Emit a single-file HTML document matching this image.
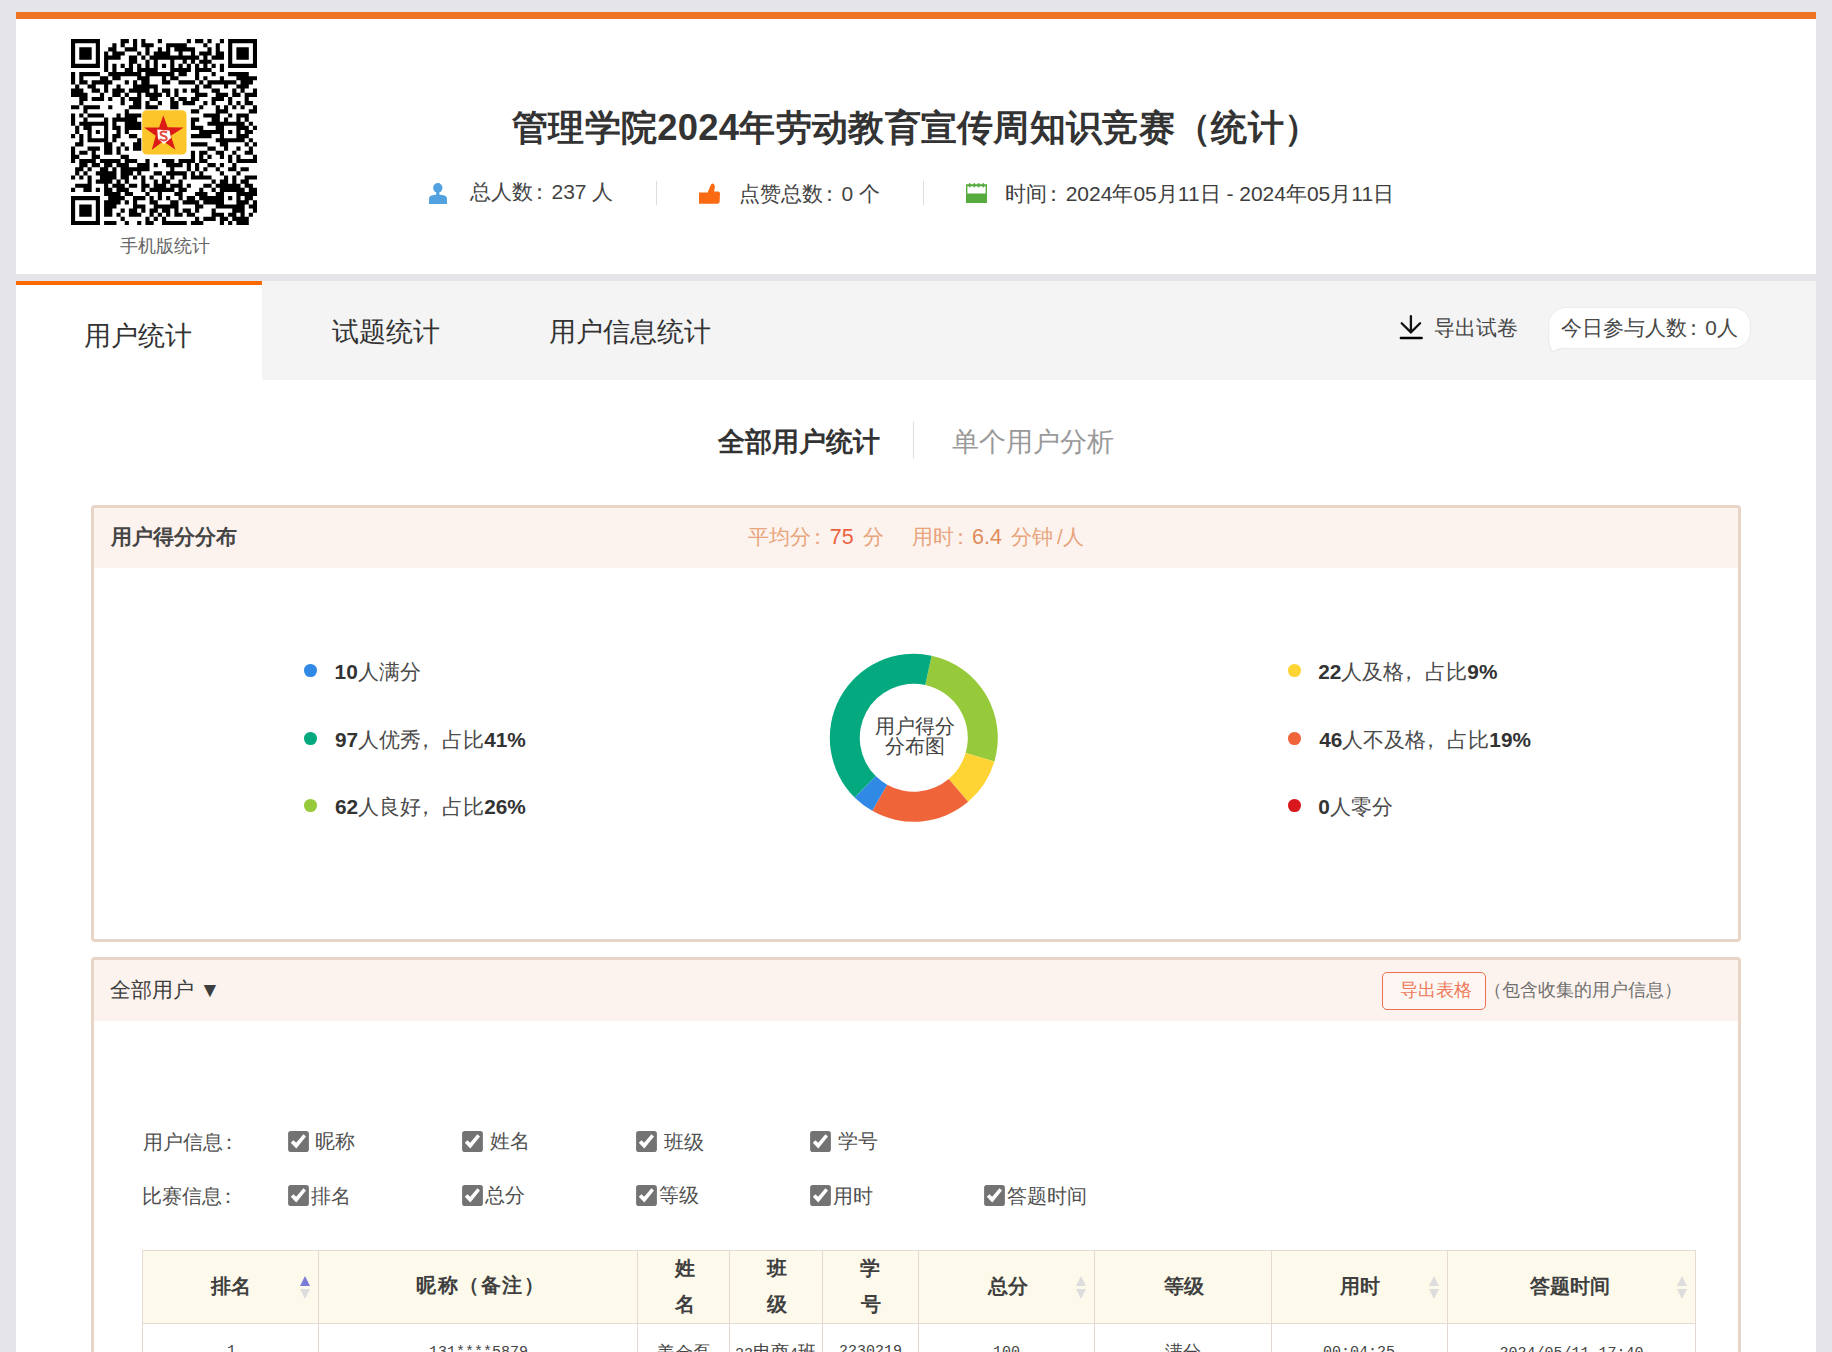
<!DOCTYPE html>
<html><head><meta charset="utf-8">
<style>
*{box-sizing:border-box;margin:0;padding:0}
html,body{width:1832px;height:1352px;overflow:hidden;background:#e5e4e9;font-family:"Liberation Sans",sans-serif;color:#333}
.a{position:absolute;white-space:nowrap;line-height:1.15}
.a b{font-weight:bold;color:#333}
.c{position:relative;left:-4px;margin-right:-2.5px}
.k{position:relative;left:-6px}
</style></head><body>
<div class="a" style="left:16px;top:12px;width:1800px;height:7px;background:#ee7322"></div>
<div class="a" style="left:16px;top:19px;width:1800px;height:255px;background:#fff"></div>
<div class="a" style="left:16px;top:281px;width:1800px;height:99px;background:#f4f4f4"></div>
<div class="a" style="left:16px;top:281px;width:246px;height:99px;background:#fff;border-top:4px solid #ff6a00"></div>
<div class="a" style="left:16px;top:380px;width:1800px;height:980px;background:#fff"></div>
<svg class="a" style="left:70.93px;top:38.93px" width="186.07" height="186.07" viewBox="0 0 45 45" shape-rendering="geometricPrecision"><path fill="#000" d="M0 0h7v1h-7zM12 0h2v1h-2zM15 0h1v1h-1zM17 0h1v1h-1zM21 0h1v1h-1zM28 0h1v1h-1zM30 0h2v1h-2zM33 0h1v1h-1zM36 0h1v1h-1zM38 0h7v1h-7zM0 1h1v1h-1zM6 1h1v1h-1zM10 1h1v1h-1zM12 1h1v1h-1zM15 1h1v1h-1zM17 1h3v1h-3zM23 1h5v1h-5zM32 1h1v1h-1zM35 1h1v1h-1zM38 1h1v1h-1zM44 1h1v1h-1zM0 2h1v1h-1zM2 2h3v1h-3zM6 2h1v1h-1zM9 2h2v1h-2zM13 2h3v1h-3zM18 2h1v1h-1zM21 2h1v1h-1zM23 2h1v1h-1zM25 2h5v1h-5zM33 2h1v1h-1zM35 2h1v1h-1zM38 2h1v1h-1zM40 2h3v1h-3zM44 2h1v1h-1zM0 3h1v1h-1zM2 3h3v1h-3zM6 3h1v1h-1zM8 3h1v1h-1zM10 3h3v1h-3zM16 3h1v1h-1zM18 3h1v1h-1zM20 3h4v1h-4zM26 3h1v1h-1zM29 3h1v1h-1zM31 3h3v1h-3zM35 3h2v1h-2zM38 3h1v1h-1zM40 3h3v1h-3zM44 3h1v1h-1zM0 4h1v1h-1zM2 4h3v1h-3zM6 4h1v1h-1zM8 4h4v1h-4zM14 4h2v1h-2zM17 4h1v1h-1zM19 4h12v1h-12zM32 4h1v1h-1zM34 4h3v1h-3zM38 4h1v1h-1zM40 4h3v1h-3zM44 4h1v1h-1zM0 5h1v1h-1zM6 5h1v1h-1zM8 5h1v1h-1zM14 5h2v1h-2zM18 5h1v1h-1zM20 5h1v1h-1zM24 5h1v1h-1zM27 5h1v1h-1zM29 5h1v1h-1zM31 5h3v1h-3zM38 5h1v1h-1zM44 5h1v1h-1zM0 6h7v1h-7zM8 6h1v1h-1zM10 6h1v1h-1zM12 6h1v1h-1zM14 6h1v1h-1zM16 6h1v1h-1zM18 6h1v1h-1zM20 6h1v1h-1zM22 6h1v1h-1zM24 6h1v1h-1zM26 6h1v1h-1zM28 6h1v1h-1zM30 6h1v1h-1zM32 6h1v1h-1zM34 6h1v1h-1zM36 6h1v1h-1zM38 6h7v1h-7zM8 7h1v1h-1zM10 7h1v1h-1zM13 7h2v1h-2zM16 7h5v1h-5zM24 7h5v1h-5zM30 7h4v1h-4zM36 7h1v1h-1zM0 8h1v1h-1zM2 8h5v1h-5zM9 8h8v1h-8zM18 8h7v1h-7zM26 8h2v1h-2zM30 8h1v1h-1zM34 8h1v1h-1zM38 8h5v1h-5zM0 9h1v1h-1zM2 9h1v1h-1zM7 9h2v1h-2zM10 9h2v1h-2zM16 9h3v1h-3zM22 9h1v1h-1zM24 9h2v1h-2zM30 9h1v1h-1zM32 9h1v1h-1zM36 9h1v1h-1zM40 9h5v1h-5zM0 10h1v1h-1zM2 10h2v1h-2zM5 10h5v1h-5zM13 10h1v1h-1zM15 10h1v1h-1zM17 10h2v1h-2zM22 10h2v1h-2zM26 10h4v1h-4zM31 10h1v1h-1zM33 10h7v1h-7zM41 10h3v1h-3zM1 11h1v1h-1zM4 11h2v1h-2zM8 11h1v1h-1zM11 11h1v1h-1zM15 11h6v1h-6zM30 11h1v1h-1zM32 11h2v1h-2zM37 11h1v1h-1zM40 11h3v1h-3zM0 12h3v1h-3zM5 12h2v1h-2zM8 12h1v1h-1zM10 12h3v1h-3zM14 12h5v1h-5zM20 12h1v1h-1zM22 12h2v1h-2zM25 12h1v1h-1zM27 12h1v1h-1zM29 12h2v1h-2zM34 12h2v1h-2zM39 12h1v1h-1zM41 12h1v1h-1zM44 12h1v1h-1zM0 13h4v1h-4zM7 13h1v1h-1zM10 13h2v1h-2zM13 13h1v1h-1zM16 13h1v1h-1zM18 13h4v1h-4zM23 13h1v1h-1zM25 13h1v1h-1zM30 13h3v1h-3zM35 13h3v1h-3zM39 13h2v1h-2zM42 13h3v1h-3zM2 14h2v1h-2zM5 14h3v1h-3zM9 14h1v1h-1zM12 14h1v1h-1zM14 14h3v1h-3zM19 14h2v1h-2zM24 14h1v1h-1zM26 14h2v1h-2zM29 14h2v1h-2zM34 14h3v1h-3zM38 14h1v1h-1zM42 14h1v1h-1zM2 15h1v1h-1zM12 15h1v1h-1zM15 15h2v1h-2zM18 15h1v1h-1zM21 15h1v1h-1zM24 15h2v1h-2zM27 15h3v1h-3zM32 15h1v1h-1zM34 15h1v1h-1zM38 15h1v1h-1zM40 15h1v1h-1zM42 15h2v1h-2zM0 16h2v1h-2zM3 16h4v1h-4zM9 16h1v1h-1zM14 16h3v1h-3zM18 16h3v1h-3zM24 16h2v1h-2zM31 16h1v1h-1zM35 16h1v1h-1zM37 16h1v1h-1zM39 16h1v1h-1zM41 16h1v1h-1zM44 16h1v1h-1zM3 17h1v1h-1zM13 17h1v1h-1zM29 17h2v1h-2zM35 17h3v1h-3zM43 17h2v1h-2zM0 18h1v1h-1zM2 18h1v1h-1zM4 18h4v1h-4zM11 18h1v1h-1zM13 18h4v1h-4zM32 18h4v1h-4zM38 18h1v1h-1zM40 18h3v1h-3zM0 19h1v1h-1zM3 19h1v1h-1zM8 19h1v1h-1zM10 19h6v1h-6zM29 19h2v1h-2zM34 19h2v1h-2zM37 19h1v1h-1zM40 19h1v1h-1zM42 19h1v1h-1zM0 20h1v1h-1zM2 20h7v1h-7zM10 20h1v1h-1zM13 20h4v1h-4zM29 20h1v1h-1zM33 20h9v1h-9zM43 20h1v1h-1zM1 21h1v1h-1zM3 21h2v1h-2zM8 21h1v1h-1zM10 21h2v1h-2zM13 21h4v1h-4zM29 21h3v1h-3zM35 21h2v1h-2zM40 21h3v1h-3zM44 21h1v1h-1zM1 22h1v1h-1zM4 22h1v1h-1zM6 22h1v1h-1zM8 22h1v1h-1zM11 22h1v1h-1zM13 22h1v1h-1zM31 22h6v1h-6zM38 22h1v1h-1zM40 22h1v1h-1zM42 22h2v1h-2zM0 23h1v1h-1zM2 23h1v1h-1zM4 23h1v1h-1zM8 23h1v1h-1zM10 23h2v1h-2zM14 23h2v1h-2zM29 23h5v1h-5zM36 23h1v1h-1zM40 23h3v1h-3zM2 24h1v1h-1zM4 24h5v1h-5zM10 24h1v1h-1zM16 24h1v1h-1zM35 24h7v1h-7zM43 24h1v1h-1zM1 25h2v1h-2zM8 25h2v1h-2zM12 25h1v1h-1zM15 25h2v1h-2zM29 25h4v1h-4zM36 25h2v1h-2zM42 25h1v1h-1zM44 25h1v1h-1zM0 26h1v1h-1zM4 26h3v1h-3zM8 26h2v1h-2zM11 26h1v1h-1zM13 26h1v1h-1zM15 26h2v1h-2zM33 26h2v1h-2zM37 26h1v1h-1zM40 26h1v1h-1zM43 26h1v1h-1zM0 27h1v1h-1zM2 27h2v1h-2zM5 27h1v1h-1zM8 27h2v1h-2zM11 27h1v1h-1zM29 27h1v1h-1zM31 27h2v1h-2zM35 27h2v1h-2zM39 27h1v1h-1zM42 27h2v1h-2zM0 28h2v1h-2zM5 28h2v1h-2zM12 28h2v1h-2zM29 28h1v1h-1zM31 28h1v1h-1zM33 28h1v1h-1zM36 28h1v1h-1zM38 28h1v1h-1zM40 28h1v1h-1zM44 28h1v1h-1zM0 29h1v1h-1zM2 29h4v1h-4zM7 29h5v1h-5zM13 29h3v1h-3zM18 29h1v1h-1zM22 29h3v1h-3zM26 29h4v1h-4zM31 29h2v1h-2zM38 29h1v1h-1zM40 29h5v1h-5zM2 30h2v1h-2zM5 30h2v1h-2zM8 30h2v1h-2zM11 30h3v1h-3zM16 30h3v1h-3zM20 30h1v1h-1zM23 30h4v1h-4zM28 30h1v1h-1zM30 30h1v1h-1zM33 30h2v1h-2zM36 30h1v1h-1zM39 30h1v1h-1zM1 31h2v1h-2zM4 31h1v1h-1zM7 31h2v1h-2zM10 31h1v1h-1zM12 31h7v1h-7zM24 31h1v1h-1zM28 31h1v1h-1zM30 31h1v1h-1zM32 31h1v1h-1zM35 31h1v1h-1zM38 31h2v1h-2zM41 31h2v1h-2zM1 32h1v1h-1zM3 32h1v1h-1zM6 32h5v1h-5zM12 32h3v1h-3zM16 32h1v1h-1zM20 32h2v1h-2zM23 32h5v1h-5zM29 32h1v1h-1zM31 32h1v1h-1zM36 32h1v1h-1zM40 32h1v1h-1zM0 33h1v1h-1zM2 33h1v1h-1zM4 33h1v1h-1zM7 33h4v1h-4zM12 33h2v1h-2zM15 33h1v1h-1zM17 33h1v1h-1zM19 33h1v1h-1zM22 33h1v1h-1zM24 33h1v1h-1zM27 33h1v1h-1zM29 33h5v1h-5zM37 33h1v1h-1zM39 33h1v1h-1zM42 33h3v1h-3zM4 34h1v1h-1zM6 34h4v1h-4zM11 34h1v1h-1zM13 34h1v1h-1zM17 34h1v1h-1zM20 34h1v1h-1zM22 34h2v1h-2zM26 34h1v1h-1zM34 34h1v1h-1zM36 34h2v1h-2zM39 34h1v1h-1zM41 34h2v1h-2zM1 35h4v1h-4zM8 35h1v1h-1zM10 35h3v1h-3zM14 35h2v1h-2zM17 35h2v1h-2zM20 35h3v1h-3zM24 35h3v1h-3zM28 35h1v1h-1zM32 35h2v1h-2zM35 35h6v1h-6zM42 35h2v1h-2zM0 36h1v1h-1zM3 36h2v1h-2zM6 36h1v1h-1zM8 36h2v1h-2zM11 36h3v1h-3zM17 36h1v1h-1zM19 36h6v1h-6zM26 36h2v1h-2zM31 36h1v1h-1zM34 36h1v1h-1zM36 36h6v1h-6zM43 36h2v1h-2zM8 37h4v1h-4zM13 37h2v1h-2zM18 37h1v1h-1zM21 37h1v1h-1zM25 37h2v1h-2zM30 37h3v1h-3zM35 37h2v1h-2zM40 37h5v1h-5zM0 38h7v1h-7zM9 38h4v1h-4zM15 38h3v1h-3zM19 38h1v1h-1zM21 38h1v1h-1zM23 38h1v1h-1zM26 38h1v1h-1zM28 38h2v1h-2zM31 38h6v1h-6zM38 38h1v1h-1zM40 38h1v1h-1zM42 38h2v1h-2zM0 39h1v1h-1zM6 39h1v1h-1zM8 39h4v1h-4zM13 39h1v1h-1zM15 39h1v1h-1zM19 39h2v1h-2zM24 39h2v1h-2zM27 39h4v1h-4zM32 39h5v1h-5zM40 39h3v1h-3zM44 39h1v1h-1zM0 40h1v1h-1zM2 40h3v1h-3zM6 40h1v1h-1zM8 40h3v1h-3zM15 40h3v1h-3zM20 40h6v1h-6zM30 40h2v1h-2zM35 40h7v1h-7zM43 40h2v1h-2zM0 41h1v1h-1zM2 41h3v1h-3zM6 41h1v1h-1zM8 41h2v1h-2zM12 41h1v1h-1zM14 41h2v1h-2zM17 41h1v1h-1zM19 41h2v1h-2zM22 41h2v1h-2zM25 41h1v1h-1zM27 41h2v1h-2zM30 41h1v1h-1zM34 41h1v1h-1zM39 41h3v1h-3zM44 41h1v1h-1zM0 42h1v1h-1zM2 42h3v1h-3zM6 42h1v1h-1zM8 42h2v1h-2zM11 42h1v1h-1zM14 42h3v1h-3zM19 42h1v1h-1zM21 42h1v1h-1zM23 42h1v1h-1zM25 42h2v1h-2zM28 42h2v1h-2zM34 42h3v1h-3zM38 42h2v1h-2zM41 42h1v1h-1zM43 42h1v1h-1zM0 43h1v1h-1zM6 43h1v1h-1zM12 43h1v1h-1zM18 43h1v1h-1zM20 43h1v1h-1zM22 43h1v1h-1zM30 43h1v1h-1zM32 43h3v1h-3zM36 43h2v1h-2zM39 43h4v1h-4zM0 44h7v1h-7zM8 44h3v1h-3zM13 44h1v1h-1zM16 44h1v1h-1zM18 44h2v1h-2zM22 44h6v1h-6zM29 44h3v1h-3zM36 44h1v1h-1zM38 44h1v1h-1zM40 44h3v1h-3z"/></svg>
<svg class="a" style="left:142px;top:110px" width="45" height="45" viewBox="0 0 45 45"><rect x="0.2" y="0.2" width="44.3" height="44.3" rx="4.5" fill="#fdc628"/><path fill="#dc1b17" d="M21.3 5.2L25.6 17.2L41.6 17.4L28.9 25.8L33.4 39.8L21.3 31.2L9.7 40L13.7 25.8L2.1 17.6L17.1 17.4Z"/><path fill="#fff" d="M15.2 19.5L27.5 20.5L29 28L22 34L16 29Z"/><path fill="none" stroke="#e04a40" stroke-width="2" d="M25 22.5Q20 20.5 18.5 23Q18.5 25.5 22 26Q25.5 27 24.5 29.5Q22 31.5 17.5 29"/></svg>

<div class="a" style="left:656px;top:181px;width:1px;height:24px;background:#ddd"></div>
<div class="a" style="left:923px;top:181px;width:1px;height:24px;background:#ddd"></div>
<div class="a" style="left:1548px;top:307px;width:203px;height:42px;background:#fff;border:1px solid #ebebeb;border-radius:18px"></div>
<div class="a" style="left:913px;top:422px;width:1px;height:36px;background:#ddd"></div>
<div class="a" style="left:91px;top:505px;width:1650px;height:437px;border:3px solid #e8d5c8;border-radius:4px;background:#fff"><div class="a" style="left:0;top:0;right:0;height:60px;background:#fcf3ee"></div></div>
<div class="a" style="left:91px;top:957px;width:1650px;height:420px;border:3px solid #e8d5c8;border-radius:4px;background:#fff"><div class="a" style="left:0;top:0;right:0;height:61px;background:#fcf3ee"></div></div>
<div class="a" style="left:1382px;top:972px;width:104px;height:38px;border:1px solid #ee6e50;border-radius:5px;background:#fdf6f2"></div>
<div class="a" style="left:303.8px;top:664.1px;width:12.8px;height:12.8px;border-radius:50%;background:#2f89e5"></div>
<div class="a" style="left:303.8px;top:732.3px;width:12.8px;height:12.8px;border-radius:50%;background:#04a97f"></div>
<div class="a" style="left:303.8px;top:799.1px;width:12.8px;height:12.8px;border-radius:50%;background:#96ca3a"></div>
<div class="a" style="left:1288.1px;top:664.1px;width:12.8px;height:12.8px;border-radius:50%;background:#fdd433"></div>
<div class="a" style="left:1288.1px;top:732.3px;width:12.8px;height:12.8px;border-radius:50%;background:#f0643a"></div>
<div class="a" style="left:1288.1px;top:799.1px;width:12.8px;height:12.8px;border-radius:50%;background:#d8181c"></div>
<svg class="a" style="left:813px;top:637px" width="200" height="200" viewBox="-100.8 -100.8 200 200"><path fill="#96ca3a" d="M17.75 -82.10A84 84 0 0 1 80.62 23.58L51.83 15.16A54 54 0 0 0 11.41 -52.78Z"/><path fill="#fdd433" d="M80.62 23.58A84 84 0 0 1 54.33 64.06L34.93 41.18A54 54 0 0 0 51.83 15.16Z"/><path fill="#f0643a" d="M54.33 64.06A84 84 0 0 1 -41.49 73.04L-26.67 46.95A54 54 0 0 0 34.93 41.18Z"/><path fill="#2f89e5" d="M-41.49 73.04A84 84 0 0 1 -59.19 59.60L-38.05 38.32A54 54 0 0 0 -26.67 46.95Z"/><path fill="#04a97f" d="M-59.19 59.60A84 84 0 0 1 17.75 -82.10L11.41 -52.78A54 54 0 0 0 -38.05 38.32Z"/></svg>
<svg class="a" style="left:429px;top:182.8px" width="18" height="21.2" viewBox="0 0 18 21.2"><ellipse cx="8.8" cy="4.8" rx="4.7" ry="4.8" fill="#52a2e0"/><rect x="7.2" y="8" width="3.2" height="4.5" fill="#52a2e0"/><path fill="#52a2e0" d="M0 21V16Q0 13 3.5 12.3L7.5 11.6Q8.8 11.3 10.1 11.6L14.5 12.3Q18 13 18 16V21Z"/></svg>
<svg class="a" style="left:699px;top:183px" width="21" height="21" viewBox="0 0 21 21"><path fill="#fa6a12" d="M0 9.6H8.6L12 1.6Q13.3 -0.2 14.9 1.2Q16.4 2.7 15.6 5.4L15 8.6H19.4Q21 8.9 21 10.6L20.6 19Q20.2 20.8 18.6 20.8H0Z"/></svg>
<svg class="a" style="left:966px;top:183px" width="21" height="20" viewBox="0 0 21 20"><path fill="#56ab3f" fill-rule="evenodd" d="M0 1.2H21V19.9H0ZM1.4 3.2V10.5H19.6V3.2Z"/><g fill="#56ab3f"><ellipse cx="3.7" cy="2.3" rx="1.1" ry="2.3"/><ellipse cx="8.3" cy="2.3" rx="1.1" ry="2.3"/><ellipse cx="12.6" cy="2.3" rx="1.1" ry="2.3"/><ellipse cx="17.3" cy="2.3" rx="1.1" ry="2.3"/></g></svg>
<svg class="a" style="left:1398px;top:314px" width="26" height="27" viewBox="0 0 26 27"><path d="M12.9 2.2V18.3M3.7 9.2L12.9 18.3L22.1 9.2" stroke="#111" stroke-width="2.3" fill="none" stroke-linecap="round"/><path d="M2.9 24H23.6" stroke="#000" stroke-width="2.6" stroke-linecap="round"/></svg>
<svg class="a" style="left:1546px;top:336px" width="20" height="18" viewBox="0 0 20 18"><path d="M2 0 Q2.5 11 7 16 Q10 13 16 12.6 L16 4 Z" fill="#fff"/><path d="M2 0 Q2.5 11 7 16 Q10 13 16 12.6" fill="none" stroke="#e6e6e6" stroke-width="1"/></svg>

<svg class="a" style="left:288px;top:1130.7px" width="21" height="21" viewBox="0 0 21 21"><rect x="0.1" y="0" width="20.8" height="21" rx="2.8" fill="#737373"/><path d="M2.8 11.8L5.4 9.2L8.2 11.8L15.4 3.2L18 5.6L8.3 17.4Z" fill="#fff"/></svg>
<svg class="a" style="left:462px;top:1130.7px" width="21" height="21" viewBox="0 0 21 21"><rect x="0.1" y="0" width="20.8" height="21" rx="2.8" fill="#737373"/><path d="M2.8 11.8L5.4 9.2L8.2 11.8L15.4 3.2L18 5.6L8.3 17.4Z" fill="#fff"/></svg>
<svg class="a" style="left:636px;top:1130.7px" width="21" height="21" viewBox="0 0 21 21"><rect x="0.1" y="0" width="20.8" height="21" rx="2.8" fill="#737373"/><path d="M2.8 11.8L5.4 9.2L8.2 11.8L15.4 3.2L18 5.6L8.3 17.4Z" fill="#fff"/></svg>
<svg class="a" style="left:810px;top:1130.7px" width="21" height="21" viewBox="0 0 21 21"><rect x="0.1" y="0" width="20.8" height="21" rx="2.8" fill="#737373"/><path d="M2.8 11.8L5.4 9.2L8.2 11.8L15.4 3.2L18 5.6L8.3 17.4Z" fill="#fff"/></svg>
<svg class="a" style="left:288px;top:1184.8px" width="21" height="21" viewBox="0 0 21 21"><rect x="0.1" y="0" width="20.8" height="21" rx="2.8" fill="#737373"/><path d="M2.8 11.8L5.4 9.2L8.2 11.8L15.4 3.2L18 5.6L8.3 17.4Z" fill="#fff"/></svg>
<svg class="a" style="left:462px;top:1184.8px" width="21" height="21" viewBox="0 0 21 21"><rect x="0.1" y="0" width="20.8" height="21" rx="2.8" fill="#737373"/><path d="M2.8 11.8L5.4 9.2L8.2 11.8L15.4 3.2L18 5.6L8.3 17.4Z" fill="#fff"/></svg>
<svg class="a" style="left:636px;top:1184.8px" width="21" height="21" viewBox="0 0 21 21"><rect x="0.1" y="0" width="20.8" height="21" rx="2.8" fill="#737373"/><path d="M2.8 11.8L5.4 9.2L8.2 11.8L15.4 3.2L18 5.6L8.3 17.4Z" fill="#fff"/></svg>
<svg class="a" style="left:810px;top:1184.8px" width="21" height="21" viewBox="0 0 21 21"><rect x="0.1" y="0" width="20.8" height="21" rx="2.8" fill="#737373"/><path d="M2.8 11.8L5.4 9.2L8.2 11.8L15.4 3.2L18 5.6L8.3 17.4Z" fill="#fff"/></svg>
<svg class="a" style="left:984px;top:1184.8px" width="21" height="21" viewBox="0 0 21 21"><rect x="0.1" y="0" width="20.8" height="21" rx="2.8" fill="#737373"/><path d="M2.8 11.8L5.4 9.2L8.2 11.8L15.4 3.2L18 5.6L8.3 17.4Z" fill="#fff"/></svg>
<div class="a" style="left:142px;top:1250px;width:1554px;height:73px;background:#fdf9eb"></div>
<div class="a" style="left:142px;top:1250px;width:1554px;height:1px;background:#e6d9d3"></div>
<div class="a" style="left:142px;top:1323px;width:1554px;height:1px;background:#e6d9d3"></div>
<div class="a" style="left:142px;top:1250px;width:1px;height:200px;background:#e6d9d3"></div>
<div class="a" style="left:318px;top:1250px;width:1px;height:200px;background:#e6d9d3"></div>
<div class="a" style="left:637px;top:1250px;width:1px;height:200px;background:#e6d9d3"></div>
<div class="a" style="left:729px;top:1250px;width:1px;height:200px;background:#e6d9d3"></div>
<div class="a" style="left:822px;top:1250px;width:1px;height:200px;background:#e6d9d3"></div>
<div class="a" style="left:918px;top:1250px;width:1px;height:200px;background:#e6d9d3"></div>
<div class="a" style="left:1094px;top:1250px;width:1px;height:200px;background:#e6d9d3"></div>
<div class="a" style="left:1271px;top:1250px;width:1px;height:200px;background:#e6d9d3"></div>
<div class="a" style="left:1447px;top:1250px;width:1px;height:200px;background:#e6d9d3"></div>
<div class="a" style="left:1695px;top:1250px;width:1px;height:200px;background:#e6d9d3"></div>
<svg class="a" style="left:299px;top:1275px" width="12" height="25" viewBox="0 0 12 25"><path d="M6 1L11 11H1Z" fill="#7b7bd8"/><path d="M6 24L11 14H1Z" fill="#dddddd"/></svg>
<svg class="a" style="left:1075px;top:1275px" width="12" height="25" viewBox="0 0 12 25"><path d="M6 1L11 11H1Z" fill="#dddddd"/><path d="M6 24L11 14H1Z" fill="#dddddd"/></svg>
<svg class="a" style="left:1428px;top:1275px" width="12" height="25" viewBox="0 0 12 25"><path d="M6 1L11 11H1Z" fill="#dddddd"/><path d="M6 24L11 14H1Z" fill="#dddddd"/></svg>
<svg class="a" style="left:1676px;top:1275px" width="12" height="25" viewBox="0 0 12 25"><path d="M6 1L11 11H1Z" fill="#dddddd"/><path d="M6 24L11 14H1Z" fill="#dddddd"/></svg>
<div id="e1" class="a" style="left:120.20px;top:235.80px;font-size:18px;color:#666">手机版统计</div>
<div id="e2" class="a" style="left:512.00px;top:106.50px;font-size:36.4px;font-weight:bold;color:#333;letter-spacing:0.3px">管理学院2024年劳动教育宣传周知识竞赛（统计）</div>
<div id="e3" class="a" style="left:470.00px;top:180.00px;font-size:21px;color:#444">总人数<span class="c">：</span>237 人</div>
<div id="e4" class="a" style="left:739.00px;top:181.50px;font-size:21px;color:#444">点赞总数<span class="c">：</span>0 个</div>
<div id="e5" class="a" style="left:1005.20px;top:181.50px;font-size:21px;color:#3d3d3d">时间<span class="c">：</span>2024年05月11日 - 2024年05月11日</div>
<div id="e6" class="a" style="left:84.20px;top:320.00px;font-size:27.3px;color:#333">用户统计</div>
<div id="e7" class="a" style="left:332.00px;top:315.70px;font-size:27.3px;color:#333">试题统计</div>
<div id="e8" class="a" style="left:549.20px;top:315.80px;font-size:27.3px;color:#333">用户信息统计</div>
<div id="e9" class="a" style="left:1433.80px;top:315.80px;font-size:21px;color:#484848">导出试卷</div>
<div id="e10" class="a" style="left:1560.80px;top:315.80px;font-size:20.8px;color:#484848">今日参与人数<span class="c">：</span>0人</div>
<div id="e11" class="a" style="left:717.80px;top:426.10px;font-size:27.3px;font-weight:bold;color:#333">全部用户统计</div>
<div id="e12" class="a" style="left:951.80px;top:426.00px;font-size:27.3px;color:#999">单个用户分析</div>
<div id="e13" class="a" style="left:111.00px;top:525.00px;font-size:21px;font-weight:bold;color:#454545">用户得分分布</div>
<div id="e14" class="a" style="left:748.20px;top:525.30px;font-size:20.6px;color:#e8a47c">平均分<span class="c">：</span><span style="color:#ed6040;font-size:21.5px">75</span><span style="display:inline-block;width:9px"></span>分<span style="display:inline-block;width:28px"></span>用时<span class="c">：</span><span style="color:#e08c5a;font-size:21.5px">6.4</span><span style="display:inline-block;width:9px"></span>分钟<span style="display:inline-block;width:4px"></span>/人</div>
<div id="e15" class="a" style="left:334.60px;top:659.80px;font-size:20.8px;color:#4a4a4a"><b>10</b>人满分</div>
<div id="e16" class="a" style="left:335.00px;top:728.30px;font-size:20.8px;color:#4a4a4a"><b>97</b>人优秀<span class="k">，</span>占比<b>41%</b></div>
<div id="e17" class="a" style="left:335.00px;top:794.70px;font-size:20.8px;color:#4a4a4a"><b>62</b>人良好<span class="k">，</span>占比<b>26%</b></div>
<div id="e18" class="a" style="left:1318.20px;top:659.80px;font-size:20.8px;color:#4a4a4a"><b>22</b>人及格<span class="k">，</span>占比<b>9%</b></div>
<div id="e19" class="a" style="left:1319.20px;top:728.30px;font-size:20.8px;color:#4a4a4a"><b>46</b>人不及格<span class="k">，</span>占比<b>19%</b></div>
<div id="e20" class="a" style="left:1318.20px;top:794.70px;font-size:20.8px;color:#4a4a4a"><b>0</b>人零分</div>
<div id="e21" class="a" style="left:870.40px;top:717.40px;font-size:19.9px;line-height:19.5px;color:#444;text-align:center;white-space:normal;width:90px">用户得分<br>分布图</div>
<div id="e22" class="a" style="left:109.60px;top:977.60px;font-size:21px;color:#3d3d3d">全部用户 ▼</div>
<div id="e23" class="a" style="left:1400.00px;top:980.40px;font-size:18px;color:#ee7a5a">导出表格</div>
<div id="e24" class="a" style="left:1484.00px;top:979.40px;font-size:18.4px;color:#707070">（包含收集的用户信息）</div>
<div id="e25" class="a" style="left:143.00px;top:1130.60px;font-size:20px;color:#505050">用户信息<span class="c">：</span></div>
<div id="e26" class="a" style="left:142.00px;top:1184.60px;font-size:20px;color:#505050">比赛信息<span class="c">：</span></div>
<div id="e27" class="a" style="left:315.20px;top:1129.60px;font-size:20px;color:#505050">昵称</div>
<div id="e28" class="a" style="left:490.20px;top:1129.60px;font-size:20px;color:#505050">姓名</div>
<div id="e29" class="a" style="left:664.20px;top:1130.60px;font-size:20px;color:#505050">班级</div>
<div id="e30" class="a" style="left:838.20px;top:1129.60px;font-size:20px;color:#505050">学号</div>
<div id="e31" class="a" style="left:311.00px;top:1184.60px;font-size:20px;color:#505050">排名</div>
<div id="e32" class="a" style="left:485.00px;top:1183.60px;font-size:20px;color:#505050">总分</div>
<div id="e33" class="a" style="left:659.00px;top:1183.60px;font-size:20px;color:#505050">等级</div>
<div id="e34" class="a" style="left:833.00px;top:1184.60px;font-size:20px;color:#505050">用时</div>
<div id="e35" class="a" style="left:1007.00px;top:1184.60px;font-size:20px;color:#505050">答题时间</div>
<div id="h1" class="a" style="left:211.00px;top:1275.00px;font-size:20px;font-weight:bold;color:#3f3f3f">排名</div>
<div id="h2" class="a" style="left:416.00px;top:1274.30px;font-size:20px;font-weight:bold;color:#3f3f3f;letter-spacing:1.5px">昵称（备注）</div>
<div id="h3a" class="a" style="left:675.30px;top:1257.00px;font-size:20px;font-weight:bold;color:#3f3f3f">姓</div>
<div id="h3b" class="a" style="left:675.30px;top:1293.00px;font-size:20px;font-weight:bold;color:#3f3f3f">名</div>
<div id="h4a" class="a" style="left:767.00px;top:1257.00px;font-size:20px;font-weight:bold;color:#3f3f3f">班</div>
<div id="h4b" class="a" style="left:767.00px;top:1293.00px;font-size:20px;font-weight:bold;color:#3f3f3f">级</div>
<div id="h5a" class="a" style="left:860.00px;top:1257.00px;font-size:20px;font-weight:bold;color:#3f3f3f">学</div>
<div id="h5b" class="a" style="left:861.00px;top:1293.00px;font-size:20px;font-weight:bold;color:#3f3f3f">号</div>
<div id="h6" class="a" style="left:987.90px;top:1275.20px;font-size:20px;font-weight:bold;color:#3f3f3f">总分</div>
<div id="h7" class="a" style="left:1163.60px;top:1275.20px;font-size:20px;font-weight:bold;color:#3f3f3f">等级</div>
<div id="h8" class="a" style="left:1340.10px;top:1275.20px;font-size:20px;font-weight:bold;color:#3f3f3f">用时</div>
<div id="h9" class="a" style="left:1529.90px;top:1275.20px;font-size:20px;font-weight:bold;color:#3f3f3f">答题时间</div>
<div id="d1" class="a" style="left:227.00px;top:1342.80px;font-family:'Liberation Mono',monospace;font-size:15px;color:#444">1</div>
<div id="d2" class="a" style="left:429.00px;top:1343.80px;font-family:'Liberation Mono',monospace;font-size:15px;color:#444">131****5879</div>
<div id="d3" class="a" style="left:656.80px;top:1343.00px;font-size:18px;color:#444">姜金磊</div>
<div id="d4" class="a" style="left:735.00px;top:1342.00px;font-family:'Liberation Mono',monospace;font-size:15px;color:#444">22<span style="font-size:18px;font-family:'Liberation Sans',sans-serif">电商</span>4<span style="font-size:18px;font-family:'Liberation Sans',sans-serif">班</span></div>
<div id="d5" class="a" style="left:839.10px;top:1342.60px;font-family:'Liberation Mono',monospace;font-size:15px;color:#444">2230219</div>
<div id="d6" class="a" style="left:993.00px;top:1343.95px;font-family:'Liberation Mono',monospace;font-size:15px;color:#444">100</div>
<div id="d7" class="a" style="left:1165.20px;top:1342.00px;font-size:18px;color:#444">满分</div>
<div id="d8" class="a" style="left:1323.00px;top:1343.95px;font-family:'Liberation Mono',monospace;font-size:15px;color:#444">00:04:25</div>
<div id="d9" class="a" style="left:1499.40px;top:1344.95px;font-family:'Liberation Mono',monospace;font-size:15px;color:#444">2024/05/11 17:40</div>
</body></html>
